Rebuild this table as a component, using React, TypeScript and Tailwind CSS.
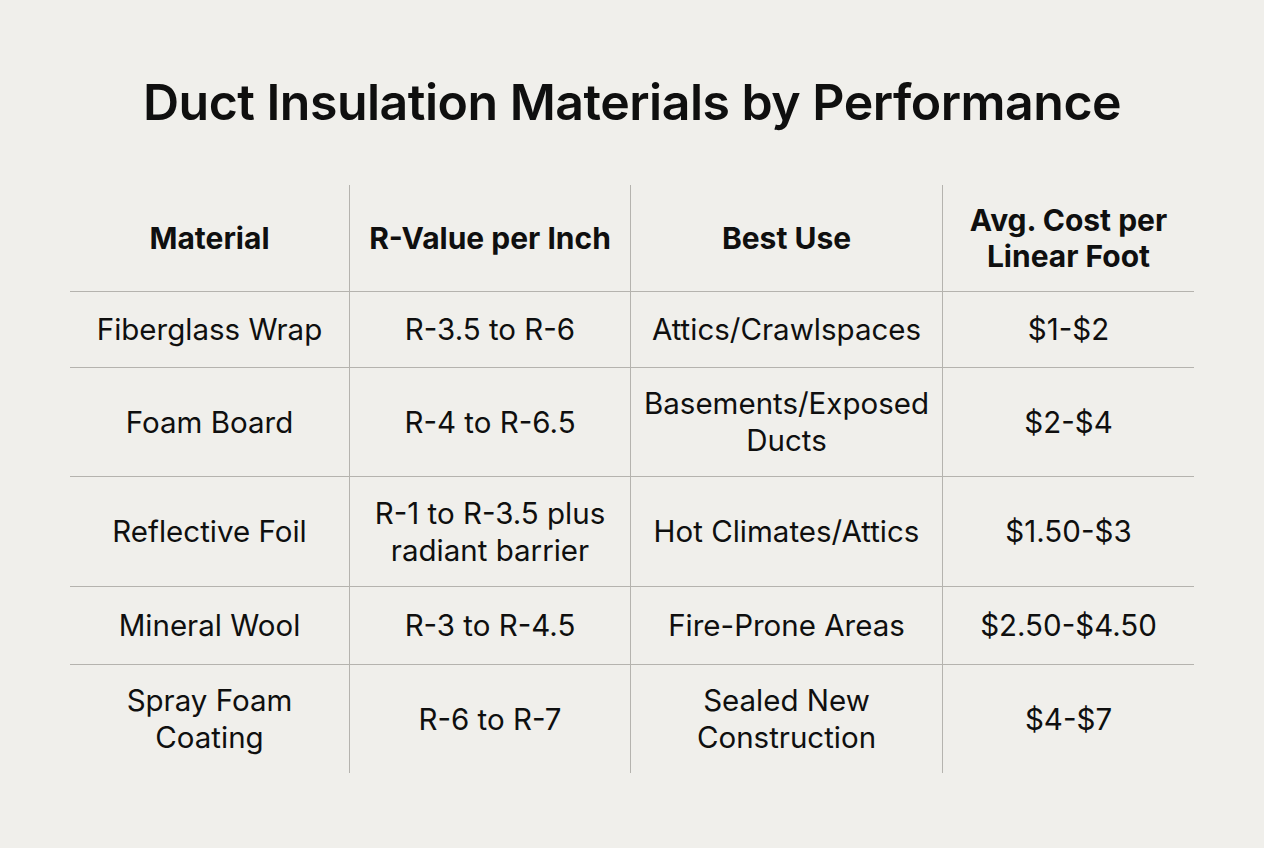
const headers = ['Material', 'R-Value per Inch', 'Best Use', 'Avg. Cost per Linear Foot'];

const rows = [
  ['Fiberglass Wrap', 'R-3.5 to R-6', 'Attics/Crawlspaces', '$1-$2'],
  ['Foam Board', 'R-4 to R-6.5', 'Basements/Exposed Ducts', '$2-$4'],
  ['Reflective Foil', 'R-1 to R-3.5 plus radiant barrier', 'Hot Climates/Attics', '$1.50-$3'],
  ['Mineral Wool', 'R-3 to R-4.5', 'Fire-Prone Areas', '$2.50-$4.50'],
  ['Spray Foam Coating', 'R-6 to R-7', 'Sealed New Construction', '$4-$7'],
];

const rowHeights = ['h-[76px]', 'h-[109px]', 'h-[110px]', 'h-[78px]', 'h-[108px]'];
const colWidths = ['w-[279px]', 'w-[281px]', 'w-[312px]', 'w-[252px]'];

export default function App() {
  return (
    <div
      className="min-h-screen w-full bg-[#f0efeb] text-[#0f0f0f] flex flex-col items-center"
      style={{ fontFamily: 'Inter, "Noto Sans", sans-serif' }}
    >
      <h1 className="mt-[71px] text-[50px] leading-[62px] font-semibold tracking-[-0.5px]">
        Duct Insulation Materials by Performance
      </h1>

      <div className="mt-[52px] w-[1124px] flex flex-col">
        {/* Header */}
        <div className="flex h-[107px] border-b border-[#b5b3ae]">
          {headers.map((h, i) => (
            <div
              key={h}
              className={`${colWidths[i]} flex items-center justify-center text-center px-2 text-[30px] leading-[36px] font-bold ${
                i > 0 ? 'border-l border-[#b5b3ae]' : ''
              }`}
            >
              <span className={i === 3 ? 'w-[210px]' : ''}>{h}</span>
            </div>
          ))}
        </div>

        {rows.map((r, ri) => (
          <div
            key={r[0]}
            className={`flex ${rowHeights[ri]} ${ri < rows.length - 1 ? 'border-b border-[#b5b3ae]' : ''}`}
          >
            {r.map((c, ci) => (
              <div
                key={ci}
                className={`${colWidths[ci]} flex items-center justify-center text-center px-2 text-[29.5px] leading-[37px] ${
                  ci > 0 ? 'border-l border-[#b5b3ae]' : ''
                }`}
              >
                <span
                  className={
                    ci === 0 && ri === 4
                      ? 'w-[190px]'
                      : ci === 1 && ri === 2
                      ? 'w-[240px]'
                      : ci === 2 && (ri === 1 || ri === 4)
                      ? 'w-[296px]'
                      : ''
                  }
                >
                  {c}
                </span>
              </div>
            ))}
          </div>
        ))}
      </div>
    </div>
  );
}
